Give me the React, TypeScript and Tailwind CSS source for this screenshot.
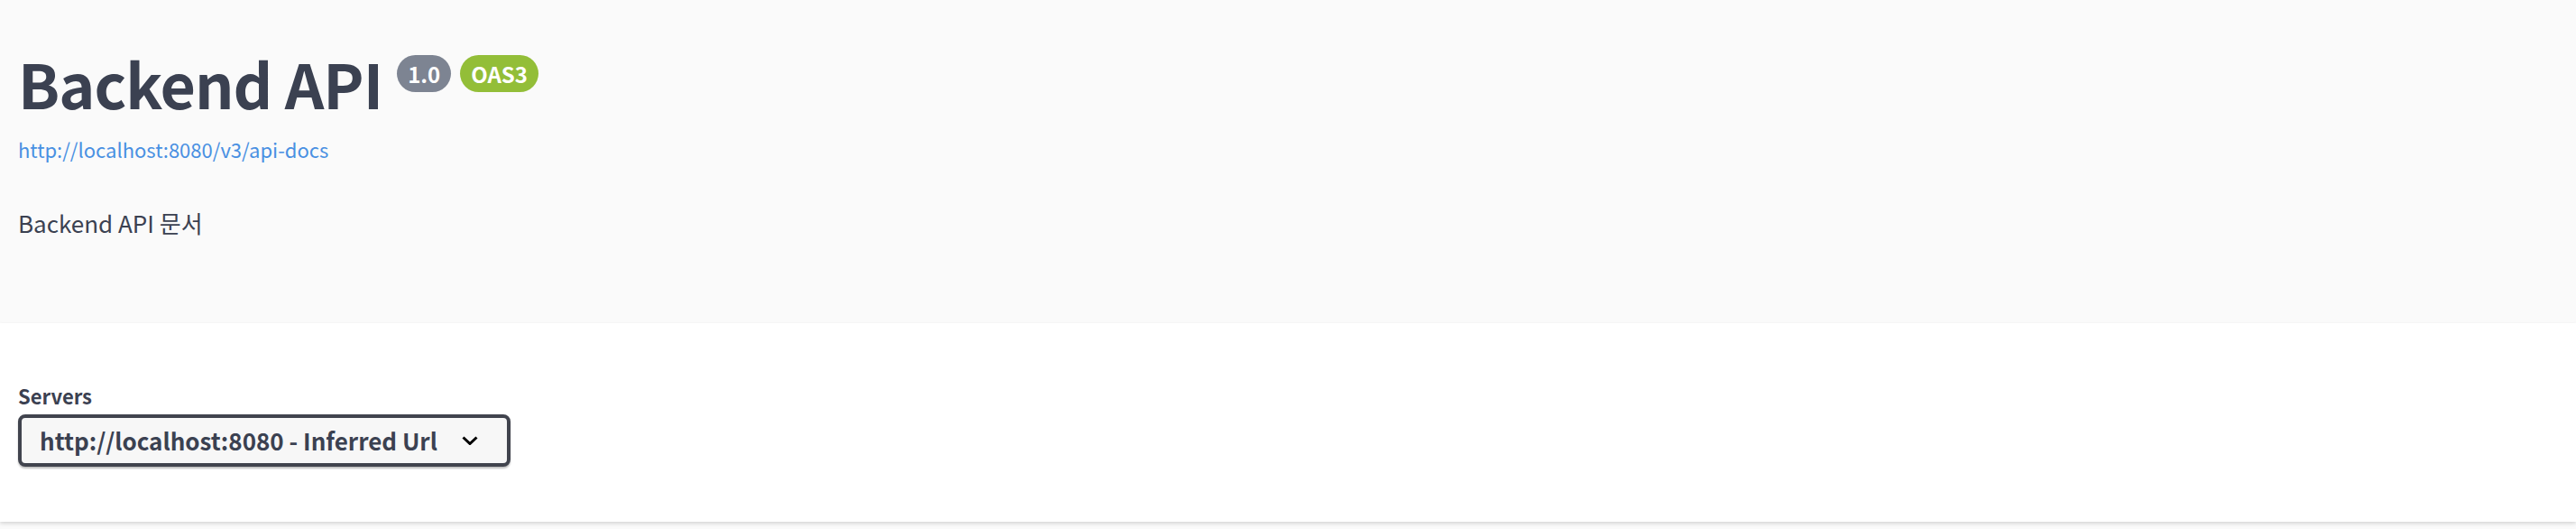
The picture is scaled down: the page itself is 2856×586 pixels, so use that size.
export default function App() {
  return (
    <div className="min-h-screen bg-[#fafafa] font-['Noto_Sans_CJK_KR','Noto_Sans',sans-serif] text-[#3b4151]">
      {/* info */}
      <div className="h-[358px] px-[20px] pt-[56px]">
        <div className="flex items-start">
          <h1 className="text-[68px] leading-[72px] font-semibold tracking-[-1px]">Backend API</h1>
          <span className="ml-[16px] mt-[5px] h-[41px] px-[12px] rounded-full bg-[#7d8492] text-white text-[24px] font-bold leading-[41px]">
            1.0
          </span>
          <span className="ml-[10px] mt-[5px] h-[41px] px-[12px] rounded-full bg-[#93be38] text-white text-[24px] font-bold leading-[41px]">
            OAS3
          </span>
        </div>
        <a
          href="#"
          className="mt-[22px] block w-fit text-[22px] leading-[30px] text-[#4990e2]"
        >
          http://localhost:8080/v3/api-docs
        </a>
        <p className="mt-[50px] text-[26px] leading-[34px]">Backend API 문서</p>
      </div>

      {/* servers */}
      <div className="h-[220px] bg-white px-[20px] pt-[66px] shadow-[0_2px_4px_0_rgba(0,0,0,0.15)]">
        <div className="text-[22px] leading-[28px] font-bold">Servers</div>
        <div className="mt-[7px] flex h-[58px] w-[546px] items-center rounded-[8px] border-[4px] border-[#41444e] bg-[#f7f7f7] pl-[20px] pr-[32px] shadow-[0_2px_2px_0_rgba(0,0,0,0.25)]">
          <span className="flex-1 text-[26px] font-bold leading-none">
            http://localhost:8080 - Inferred Url
          </span>
          <svg width="18" height="10" viewBox="0 0 18 10" fill="none">
            <path d="M1.5 1.5 9 8.5 16.5 1.5" stroke="#000" strokeWidth="3" />
          </svg>
        </div>
      </div>
    </div>
  );
}
